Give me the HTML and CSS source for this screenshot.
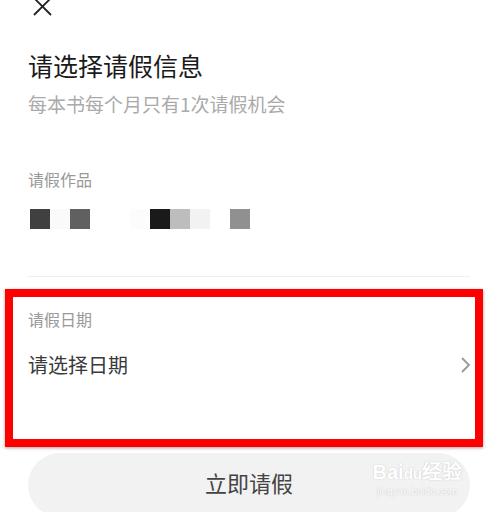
FILE: index.html
```html
<!DOCTYPE html>
<html lang="zh-CN">
<head>
    <meta charset="UTF-8">
    <meta name="viewport" content="width=device-width, initial-scale=1.0">
    <title>请假</title>
    <link rel="stylesheet" href="styles.css">
</head>
<body>

    <div class="page">
        <div class="close">
            <svg width="20" height="17" viewBox="0 0 20 17">
                <line x1="2" y1="-2" x2="19" y2="15" stroke="#222" stroke-width="1.8"/>
                <line x1="19" y1="-2" x2="2" y2="15" stroke="#222" stroke-width="1.8"/>
            </svg>
        </div>

        <h2 class="title">请选择请假信息</h2>
        <p class="subtitle">每本书每个月只有1次请假机会</p>

        <div class="label">请假作品</div>
        <div class="thumbs">
            <span style="background:#404040"></span>
            <span style="background:#fafafa"></span>
            <span style="background:#606060"></span>
            <span style="background:#fff"></span>
            <span style="background:#fff"></span>
            <span style="background:#fcfcfc"></span>
            <span style="background:#1a1a1a"></span>
            <span style="background:#bdbdbd"></span>
            <span style="background:#f2f2f2"></span>
            <span style="background:#fff"></span>
            <span style="background:#909090"></span>
        </div>

        <div class="divider"></div>

        <div class="date-box">
            <div class="label">请假日期</div>
            <div class="date-row">
                <span class="date-value">请选择日期</span>
                <svg width="12" height="18" viewBox="0 0 12 18">
                    <polyline points="3,2 10,9 3,16" fill="none" stroke="#999" stroke-width="1.8"/>
                </svg>
            </div>
        </div>

        <button class="submit-btn">
            立即请假
            <span class="watermark">Bai<b>du</b>经验<small>jingyan.baidu.com</small></span>
        </button>
    </div>

</body>
</html>
```

FILE: styles.css
```css
body {
    margin: 0;
    background: #fff;
    font-family: "Noto Sans CJK SC", "Noto Sans", sans-serif;
    overflow: hidden;
}
.page {
    padding: 0 22px 0 28px;
}
.close {
    height: 17px;
    margin-left: 4px;
}
.close svg {
    display: block;
}
.title {
    margin: 36px 0 0;
    font-size: 25px;
    line-height: 25px;
    font-weight: normal;
    color: #1a1a1a;
}
.subtitle {
    margin: 16px 0 0;
    font-size: 19px;
    line-height: 19px;
    color: #aaa;
}
.label {
    margin-top: 58px;
    font-size: 16px;
    line-height: 16px;
    color: #999;
}
.thumbs {
    display: flex;
    margin-top: 22px;
    margin-left: 2px;
}
.thumbs span {
    width: 20px;
    height: 20px;
}
.divider {
    margin-top: 47px;
    height: 1px;
    background: #efefef;
}
.date-box {
    margin: 12px -13px 0 -23px;
    border: 8px solid #f00;
    padding: 14px 4px 64px 15px;
    box-shadow: 0 1px 3px rgba(80, 0, 0, 0.4);
}
.date-box .label {
    margin-top: 0;
}
.date-row {
    display: flex;
    align-items: center;
    justify-content: space-between;
    margin-top: 28px;
}
.date-value {
    font-size: 20px;
    line-height: 20px;
    color: #3a3a3a;
}
.date-row svg {
    display: block;
}
.submit-btn {
    position: relative;
    display: block;
    width: 100%;
    height: 64px;
    margin-top: 6px;
    border: none;
    border-radius: 32px;
    background: #f2f2f2;
    font-family: inherit;
    font-size: 22px;
    color: #444;
    padding: 0 0 6px;
}
.watermark {
    position: absolute;
    right: 8px;
    top: 8px;
    font-family: "Liberation Sans", sans-serif;
    font-size: 20px;
    font-weight: bold;
    color: #fff;
    text-shadow: 0 0 1px #ccc, 0 0 1px #ccc;
    text-align: center;
    line-height: 22px;
}
.watermark b {
    font-size: 15px;
}
.watermark small {
    display: block;
    font-size: 10px;
    font-weight: normal;
    line-height: 14px;
}
```
